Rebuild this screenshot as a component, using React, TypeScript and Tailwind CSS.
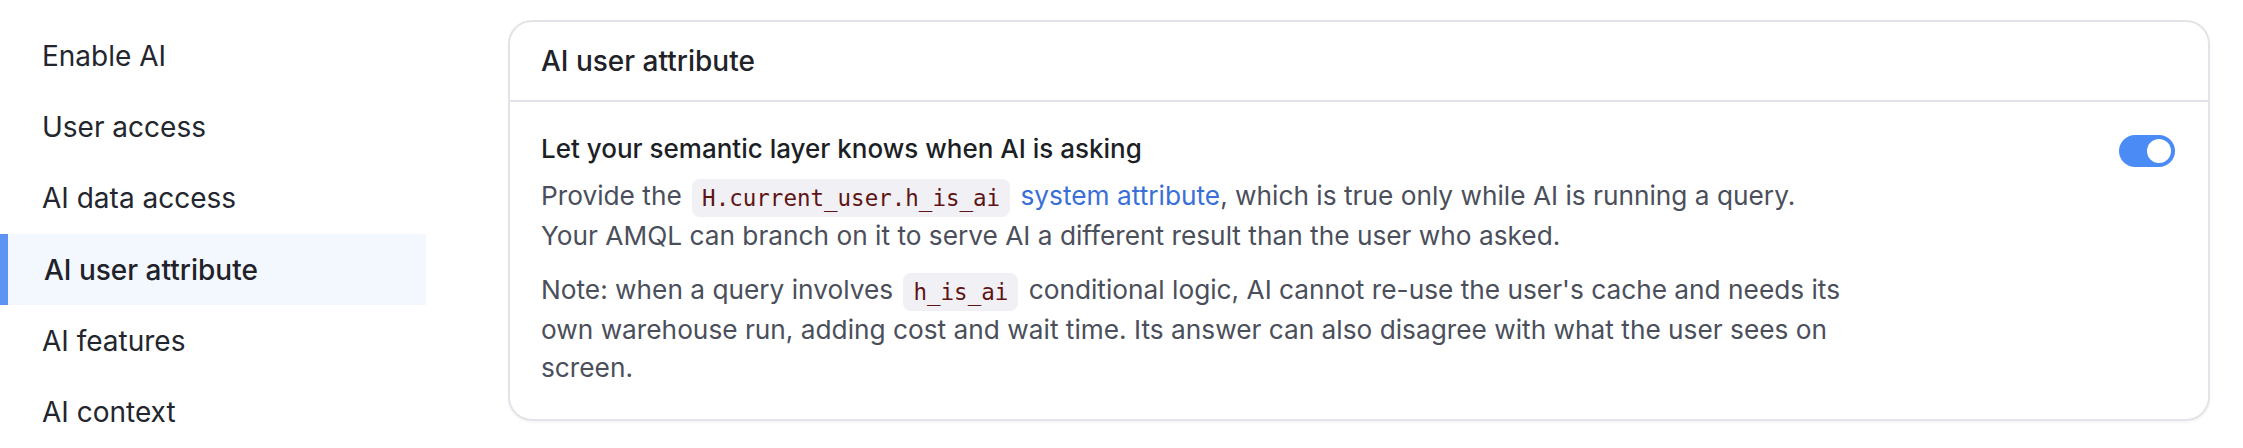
import { useState } from 'react'

const NAV = ['Enable AI', 'User access', 'AI data access', 'AI user attribute', 'AI features', 'AI context']

function Code({ children }: { children: string }) {
  return (
    <code className="mx-[3px] inline-block rounded-[8px] bg-[#f0f0f5] px-[10px] py-[4px] align-middle font-['DejaVu_Sans_Mono',monospace] text-[22.5px] leading-[30px] text-[#5e1414]">
      {children}
    </code>
  )
}

function Toggle({ on, onChange }: { on: boolean; onChange: (v: boolean) => void }) {
  return (
    <button
      type="button"
      onClick={() => onChange(!on)}
      className={`flex h-[32px] w-[56px] shrink-0 items-center rounded-full px-[4px] ${
        on ? 'justify-end bg-[#4b8bf5]' : 'justify-start bg-[#d4d6dd]'
      }`}
    >
      <span className="h-[24px] w-[24px] rounded-full bg-white" />
    </button>
  )
}

export default function App() {
  const [active, setActive] = useState('AI user attribute')
  const [enabled, setEnabled] = useState(true)

  return (
    <div className="flex h-[448px] w-full bg-white font-['Inter',sans-serif] antialiased">
      <nav className="flex w-[426px] shrink-0 flex-col pt-[20px]">
        {NAV.map((item) =>
          item === active ? (
            <div
              key={item}
              className="flex h-[72px] items-center border-l-[8px] border-[#5e94f1] bg-[#f3f7fe] pl-[36px] text-[28px] font-medium text-[#1f2229]"
            >
              {item}
            </div>
          ) : (
            <div
              key={item}
              onClick={() => setActive(item)}
              className="flex h-[72px] cursor-pointer items-center pl-[42px] text-[28px] text-[#23262e]"
            >
              {item}
            </div>
          )
        )}
      </nav>

      <div className="flex-1 pl-[82px] pr-[33px] pt-[20px]">
        <section className="rounded-[24px] border-2 border-[#e3e3e9] bg-white shadow-[0_2px_3px_rgba(0,0,0,0.04)]">
          <header className="flex h-[80px] items-center border-b-2 border-[#e3e3e9] px-[31px] text-[28px] font-medium text-[#1f2229]">
            AI user attribute
          </header>
          <div className="flex items-start justify-between pl-[31px] pr-[33px] pb-[32px] pt-[28px]">
            <div className="max-w-[1322px] text-[26.25px] leading-[38px] text-[#4b4f5b]">
              <div className="text-[26px] font-medium text-[#1d1f26]">
                Let your semantic layer knows when AI is asking
              </div>
              <p className="mt-[9px]">
                Provide the <Code>H.current_user.h_is_ai</Code>{' '}
                <a className="text-[#3a6fd8]">system attribute</a>, which is true only while AI is running a query.
                <br />
                Your AMQL can branch on it to serve AI a different result than the user who asked.
              </p>
              <p className="mt-[16px]">
                Note: when a query involves <Code>h_is_ai</Code> conditional logic, AI cannot re-use the user's cache
                and needs its own warehouse run, adding cost and wait time. Its answer can also disagree with what the
                user sees on screen.
              </p>
            </div>
            <div className="mt-[5px]">
              <Toggle on={enabled} onChange={setEnabled} />
            </div>
          </div>
        </section>
      </div>
    </div>
  )
}
